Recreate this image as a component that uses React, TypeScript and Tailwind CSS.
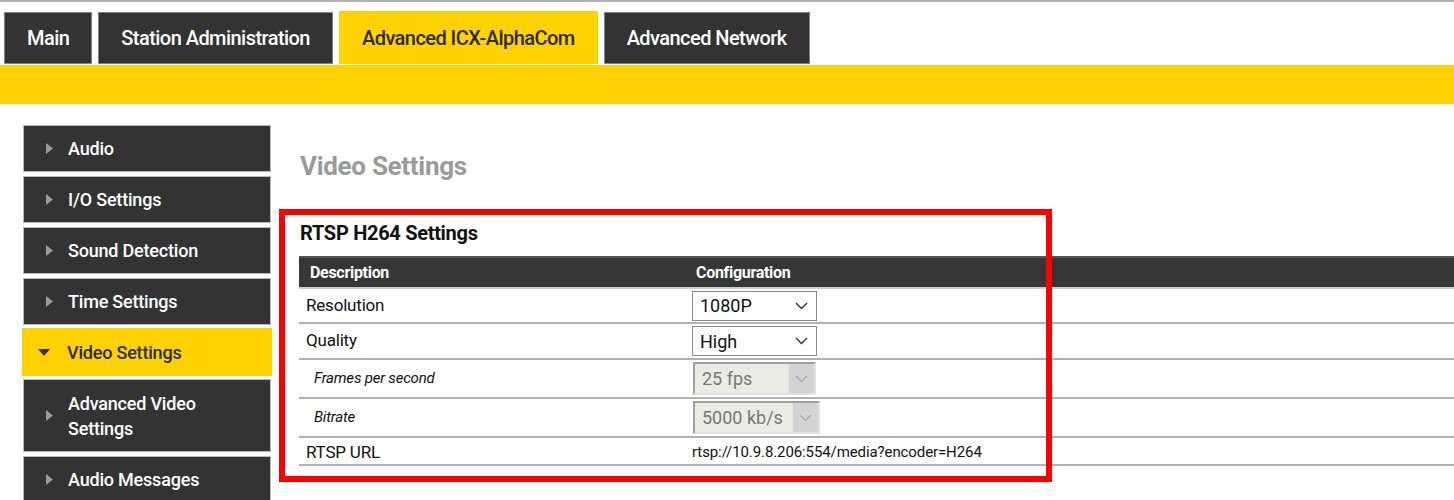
import React from "react";

const font = { fontFamily: "Roboto, 'Liberation Sans', sans-serif" };

function Chevron({ color = "#333" }: { color?: string }) {
  return (
    <svg width="13" height="8" viewBox="0 0 13 8" fill="none">
      <polyline points="1,1 6.5,6.5 12,1" stroke={color} strokeWidth="1.4" />
    </svg>
  );
}

function TriRight() {
  return (
    <svg width="7" height="11" viewBox="0 0 7 11">
      <polygon points="0,0 7,5.5 0,11" fill="#9a9a9a" />
    </svg>
  );
}

function TriDown() {
  return (
    <svg width="12" height="7" viewBox="0 0 12 7">
      <polygon points="0,0 12,0 6,7" fill="#333" />
    </svg>
  );
}

const tabs = [
  { label: "Main", active: false },
  { label: "Station Administration", active: false },
  { label: "Advanced ICX-AlphaCom", active: true },
  { label: "Advanced Network", active: false },
];

const menu = [
  { label: "Audio" },
  { label: "I/O Settings" },
  { label: "Sound Detection" },
  { label: "Time Settings" },
  { label: "Video Settings", active: true },
  { label: "Advanced Video", label2: "Settings" },
  { label: "Audio Messages" },
];

function Select({ value, w }: { value: string; w: string }) {
  return (
    <div
      className={`${w} h-[30px] border border-[#8a8a8a] bg-white flex items-center justify-between pl-[7px] pr-[8px] text-[18px] text-[#111]`}
    >
      <span>{value}</span>
      <Chevron />
    </div>
  );
}

function DisabledSelect({ value, w }: { value: string; w: string }) {
  return (
    <div
      className={`${w} h-[33px] border-2 border-t-[#a0a0a0] border-l-[#a0a0a0] border-r-[#e2e2e2] border-b-[#e2e2e2] bg-[#ebebe6] flex items-center justify-between pl-[7px] text-[18px] text-[#777]`}
    >
      <span>{value}</span>
      <div className="h-full w-[26px] bg-[#d3d3d3] border-l border-[#e6e6e6] flex items-center justify-center">
        <Chevron color="#a8a8a8" />
      </div>
    </div>
  );
}

export default function App() {
  return (
    <div className="relative w-full h-[500px] overflow-hidden bg-white" style={font}>
      <div className="h-[2px] bg-[#b0b0b0]" />

      {/* top tabs */}
      <div className="flex items-end gap-[6px] pl-[4px] pt-[9px]">
        {tabs.map((t) =>
          t.active ? (
            <div
              key={t.label}
              className="h-[53px] px-[23px] flex items-center bg-[#ffd200] text-[#2a2a2a] text-[20px] tracking-[-0.55px] font-medium"
            >
              {t.label}
            </div>
          ) : (
            <div
              key={t.label}
              className="h-[52px] px-[22px] flex items-center bg-[#333333] border border-[#808080] text-white text-[20px] tracking-[-0.55px] font-medium"
            >
              {t.label}
            </div>
          )
        )}
      </div>
      <div className="mt-[1px] h-[39px] bg-[#ffd200]" />

      <div className="flex">
        {/* side menu */}
        <div className="pl-[23px] pt-[21px] flex flex-col gap-[4px]">
          {menu.map((m) =>
            m.active ? (
              <div
                key={m.label}
                className="-mx-[1px] -my-[1px] w-[250px] h-[48px] bg-[#ffd200] flex items-center text-[#2a2a2a] text-[18px] tracking-[-0.2px] font-medium"
              >
                <div className="w-[45px] flex justify-end pr-[17px]">
                  <TriDown />
                </div>
                <span>{m.label}</span>
              </div>
            ) : (
              <div
                key={m.label}
                className={`w-[248px] ${m.label2 ? "h-[73px]" : "h-[47px]"} bg-[#333333] border border-[#b8b8b8] flex items-center text-white text-[18px] tracking-[-0.2px] font-medium`}
              >
                <div className="w-[44px] flex justify-end pr-[15px]">
                  <TriRight />
                </div>
                {m.label2 ? (
                  <span className="leading-[25px]">
                    {m.label}
                    <br />
                    {m.label2}
                  </span>
                ) : (
                  <span>{m.label}</span>
                )}
              </div>
            )
          )}
        </div>

        {/* page content */}
        <div className="flex-1 pl-[28px] pt-[46px]">
          <h1 className="text-[26px] leading-[32px] font-bold text-[#9a9a9a] tracking-[-0.3px] pl-[1px]">
            Video Settings
          </h1>
          <h2 className="mt-[39px] text-[20px] leading-[24px] font-bold text-[#111] tracking-[-0.3px] pl-[1px]">
            RTSP H264 Settings
          </h2>

          <div className="mt-[11px] text-[#111]">
            <div className="grid grid-cols-[386px_1fr] h-[33px] items-center bg-[#363636] border-t-2 border-[#555] border-b-2 border-b-[#cfcfcf] text-white font-bold text-[16px] tracking-[-0.3px]">
              <div className="pl-[11px]">Description</div>
              <div className="pl-[11px]">Configuration</div>
            </div>

            <div className="grid grid-cols-[386px_1fr] h-[35px] items-center border-b-2 border-[#b0b0b0] text-[17px]">
              <div className="pl-[7px] tracking-[-0.2px]">Resolution</div>
              <div className="pl-[7px]">
                <Select value="1080P" w="w-[125px]" />
              </div>
            </div>
            <div className="grid grid-cols-[386px_1fr] h-[36px] items-center border-b-2 border-[#b0b0b0] text-[17px]">
              <div className="pl-[7px] tracking-[-0.2px] -mt-[1px]">Quality</div>
              <div className="pl-[7px]">
                <Select value="High" w="w-[125px]" />
              </div>
            </div>
            <div className="grid grid-cols-[386px_1fr] h-[39px] items-center border-b-2 border-[#b0b0b0] text-[15px]">
              <div className="pl-[15px] italic tracking-[-0.2px]">Frames per second</div>
              <div className="pl-[8px]">
                <DisabledSelect value="25 fps" w="w-[123px]" />
              </div>
            </div>
            <div className="grid grid-cols-[386px_1fr] h-[39px] items-center border-b-2 border-[#b0b0b0] text-[15px]">
              <div className="pl-[15px] italic tracking-[-0.2px]">Bitrate</div>
              <div className="pl-[8px]">
                <DisabledSelect value="5000 kb/s" w="w-[127px]" />
              </div>
            </div>
            <div className="grid grid-cols-[386px_1fr] h-[28px] items-center border-b-2 border-[#b0b0b0]">
              <div className="pl-[7px] text-[17px] tracking-[-0.2px] mt-[2px]">RTSP URL</div>
              <div className="pl-[7px] text-[15px] tracking-[-0.1px]">
                rtsp://10.9.8.206:554/media?encoder=H264
              </div>
            </div>
          </div>
        </div>
      </div>

      {/* highlight frame */}
      <div className="absolute left-[279px] top-[209px] w-[773px] h-[273px] border-[6px] border-[#ff0000] pointer-events-none" />
    </div>
  );
}
